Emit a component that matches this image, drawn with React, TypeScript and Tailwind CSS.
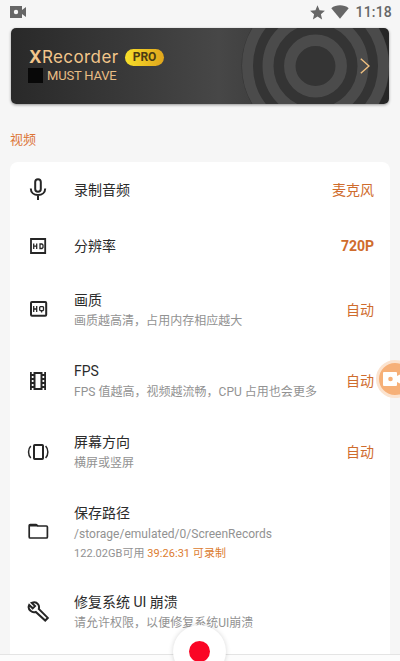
import React from 'react';

interface SettingItem {
  id: string;
  icon: React.ReactNode;
  title: string;
  description?: string;
  value?: string;
  valueClass?: string;
  storage?: { free: string; recordable: string };
}

interface IconProps {
  children: React.ReactNode;
}

const Icon: React.FC<IconProps> = ({ children }) => (
  <svg
    viewBox="0 0 24 24"
    className="h-6 w-6 shrink-0"
    fill="none"
    stroke="#262626"
    strokeWidth="2"
  >
    {children}
  </svg>
);

const MicIcon = () => (
  <Icon>
    <rect x="9.2" y="1.200" width="5.600" height="12.600" rx="2.800" />
    <path d="M4.800 10.500c0 4 3.200 6.500 7.200 6.500s7.200-2.500 7.200-6.500M12 17v5" />
  </Icon>
);

const HdIcon = () => (
  <Icon>
    <path d="M5 5h14.200v14H5z" strokeWidth="1.800" />
    <path d="M7.700 9.500v5.500M10.700 9.500v5.500M7.700 12.200h3M14 10h2l1 1v2.500l-1 1h-2z" strokeWidth="1.300" />
  </Icon>
);

const HqIcon = () => (
  <Icon>
    <rect x="5" y="4" width="15.200" height="13.800" rx="1" />
    <path d="M7.700 8v6M10.700 8v6M7.700 11h3M14.300 8.700h2.600l.6.600v2.700l-.6.600h-2.600l-.6-.6V9.300zM15.600 12v2.500" strokeWidth="1.300" />
  </Icon>
);

const FilmIcon = () => (
  <Icon>
    <path
      d="M20 3v18h-1.800v-2h-1.700v2h-9v-2H5.800v2H4V3h1.800v2h1.700V3h9v2h1.700V3zM5.800 7v2h1.700V7zm0 4v2h1.700v-2zm0 4v2h1.700v-2zM16.500 7v2h1.700V7zm0 4v2h1.700v-2zm0 4v2h1.700v-2zM9.500 5v14h5V5z"
      fill="#262626"
      fillRule="evenodd"
      stroke="none"
    />
  </Icon>
);

const OrientationIcon = () => (
  <Icon>
    <rect x="8" y="5" width="9" height="14" rx=".8" />
    <path d="M4.800 6C1.800 9 1.800 15 4.800 18M19.600 6c3 3 3 9 0 12" strokeWidth="1.500" />
  </Icon>
);

const FolderIcon = () => (
  <Icon>
    <path d="M4.200 18h16.200a1 1 0 0 0 1-1V7a1 1 0 0 0-1-1H12L10 4.500H4.200a1 1 0 0 0-1 1V17a1 1 0 0 0 1 1z" strokeWidth="1.700" />
    <path d="M3.500 4h6.500l2 2.500H3.500z" fill="#262626" stroke="none" />
  </Icon>
);

const WrenchIcon = () => (
  <Icon>
    <path
      d="M3.200 5l3.500 3.300L9 6.100 5.700 2.900c2.300-1 5-.4 6.400 1.400 1 1.500 1.200 3 .7 4.700l9 8.900-2.600 2.600-9.400-8.500c-1.800.6-3.700.3-5.100-1.100C2.800 9.400 2.200 7 3.200 5z"
      strokeWidth="2"
    />
  </Icon>
);

const settings: SettingItem[] = [
  { id: 'audio', icon: <MicIcon />, title: '录制音频', value: '麦克风' },
  { id: 'resolution', icon: <HdIcon />, title: '分辨率', value: '720P', valueClass: 'font-bold' },
  { id: 'quality', icon: <HqIcon />, title: '画质', description: '画质越高清，占用内存相应越大', value: '自动' },
  { id: 'fps', icon: <FilmIcon />, title: 'FPS', description: 'FPS 值越高，视频越流畅，CPU 占用也会更多', value: '自动' },
  { id: 'orientation', icon: <OrientationIcon />, title: '屏幕方向', description: '横屏或竖屏', value: '自动' },
  {
    id: 'path',
    icon: <FolderIcon />,
    title: '保存路径',
    description: '/storage/emulated/0/ScreenRecords',
    storage: { free: '122.02GB可用', recordable: '39:26:31 可录制' },
  },
  { id: 'fix', icon: <WrenchIcon />, title: '修复系统 UI 崩溃', description: '请允许权限，以便修复系统UI崩溃' },
];

const StatusBar = () => (
  <header className="flex h-6 items-center justify-between pr-2 pl-[10px] text-[#666]">
    <svg viewBox="0 0 16 12" className="h-3 w-4" fill="currentColor">
      <path fillRule="evenodd" d="M0 0h12v4l4-3v10l-4-3v4H0zM6 3.800a2.200 2.200 0 1 0 0 4.400 2.200 2.200 0 0 0 0-4.400z" />
    </svg>
    <div className="flex items-center">
      <svg viewBox="0 0 24 24" className="mr-[5px] h-[17px] w-[17px]" fill="currentColor">
        <path d="M12 17.800L18.500 22l-1.700-7.600L22.500 9.400l-7.600-.7L12 1.800 9.100 8.700l-7.600.7 5.700 5L5.500 22z" />
      </svg>
      <svg viewBox="0 0 18 14" className="mr-[6px] h-[14px] w-[18px]" fill="currentColor">
        <path d="M9 13.800L.3 3.200C5 -.6 13 -.6 17.700 3.200z" />
      </svg>
      <span className="text-[14px] leading-6 font-medium tracking-[0.2px]">11:18</span>
    </div>
  </header>
);

const ProBanner = () => (
  <section className="relative mx-[11px] mt-1 flex h-[76px] shrink-0 items-center justify-between overflow-hidden rounded-[5px] bg-linear-to-r from-[#292929] via-[#474747] via-55% to-[#262626] pr-[19px] pl-[18px] shadow-[0_1px_3px_rgba(0,0,0,0.4)]">
    <svg viewBox="0 0 150 76" className="absolute top-0 right-0 h-[76px] w-[150px]" fill="none" stroke="#4b4b4b">
      <circle cx="76.500" cy="38" r="74" fill="#343434" stroke="none" />
      <circle cx="76.500" cy="38" r="68" strokeWidth="11" />
      <circle cx="76.500" cy="38" r="47.500" strokeWidth="11" />
      <circle cx="76.500" cy="38" r="25.700" strokeWidth="11.500" />
    </svg>
    <div className="relative">
      <div className="flex h-[19px] items-center">
        <h1 className="w-[90px] font-['Inter','Roboto',sans-serif] text-[17px] leading-[17px] tracking-[0.4px] whitespace-nowrap text-[#f3c68b]">
          <span className="font-bold">X</span>Recorder
        </h1>
        <span className="ml-[6px] flex h-[17px] w-[39px] items-center justify-center rounded-full bg-linear-to-r from-[#f7e02a] to-[#e0a51c] text-[12px] font-bold text-[#4b3b13]">
          PRO
        </span>
      </div>
      <div className="-ml-px flex items-center gap-1">
        <span className="h-[15px] w-[15px] bg-[#080808]" />
        <span className="text-[13px] leading-[18px] tracking-[-0.2px] text-[#e8bd85]">MUST HAVE</span>
      </div>
    </div>
    <svg viewBox="0 0 10 16" className="relative h-4 w-[10px]" fill="none" stroke="#f0c080" strokeWidth="1.400">
      <path d="M.8.8L9 8 .8 15.200" />
    </svg>
  </section>
);

const SettingRow: React.FC<{ item: SettingItem }> = ({ item }) => {
  const height = item.storage ? 'h-[89px]' : item.description ? 'h-[71px]' : 'h-14';
  const textOffset = item.storage ? 'pt-[3px]' : item.description ? 'pt-[2px]' : '';

  return (
    <li className={`flex items-center px-4 ${height}`}>
      {item.icon}
      <div className={`ml-6 min-w-0 flex-1 whitespace-nowrap ${textOffset}`}>
        <h3 className="text-[14px] leading-[21px] text-[#2b2b2b]">{item.title}</h3>
        {item.description && (
          <p className="text-[12px] leading-[20px] tracking-[0.02px] text-[#929292]">{item.description}</p>
        )}
        {item.storage && (
          <p className="text-[11px] leading-[19px] tracking-[0.04px] text-[#929292]">
            {item.storage.free} <span className="text-[#dc7c30]">{item.storage.recordable}</span>
          </p>
        )}
      </div>
      {item.value && (
        <span className={`text-[14px] leading-5 text-[#cf6c2d] ${item.valueClass ?? ''}`}>{item.value}</span>
      )}
    </li>
  );
};

export default function App() {
  return (
    <div className="relative flex h-[661px] w-[400px] flex-col overflow-hidden bg-[#f6f6f6] font-['Roboto','Noto_Sans_CJK_SC',sans-serif]">
      <StatusBar />
      <ProBanner />

      <h2 className="mt-[26px] ml-[10px] text-[13px] leading-5 text-[#dc7436]">视频</h2>

      <ul className="mx-[10px] mt-3 h-[520px] shrink-0 rounded-t-lg bg-white">
        {settings.map((item) => (
          <SettingRow key={item.id} item={item} />
        ))}
      </ul>

      {/* Floating recorder shortcut, docked to the right edge */}
      <button className="absolute top-[360px] -right-[14px] flex h-[38px] w-[38px] items-center rounded-full border-[3px] border-[#fbe3cf] bg-[#f6b078] pl-1">
        <svg viewBox="0 0 20 14" className="h-[14px] w-5 shrink-0" fill="#fff">
          <path fillRule="evenodd" d="M1 0h12a1 1 0 0 1 1 1v3l6-3v12l-6-3v3a1 1 0 0 1-1 1H1a1 1 0 0 1-1-1V1a1 1 0 0 1 1-1zm6.500 4.700a2.300 2.300 0 1 0 0 4.600 2.300 2.300 0 0 0 0-4.600z" />
        </svg>
      </button>

      {/* Bottom bar with the record button */}
      <div className="absolute inset-x-0 bottom-0 h-[7px] border-t border-[#e4e4e4] bg-[#fcfcfc]" />
      <button className="absolute top-[625px] left-[173px] flex h-[53px] w-[53px] items-center justify-center rounded-full bg-white shadow-[0_0_5px_rgba(0,0,0,0.16)]">
        <span className="h-[21px] w-[21px] rounded-full bg-[#fa0525]" />
      </button>
    </div>
  );
}
